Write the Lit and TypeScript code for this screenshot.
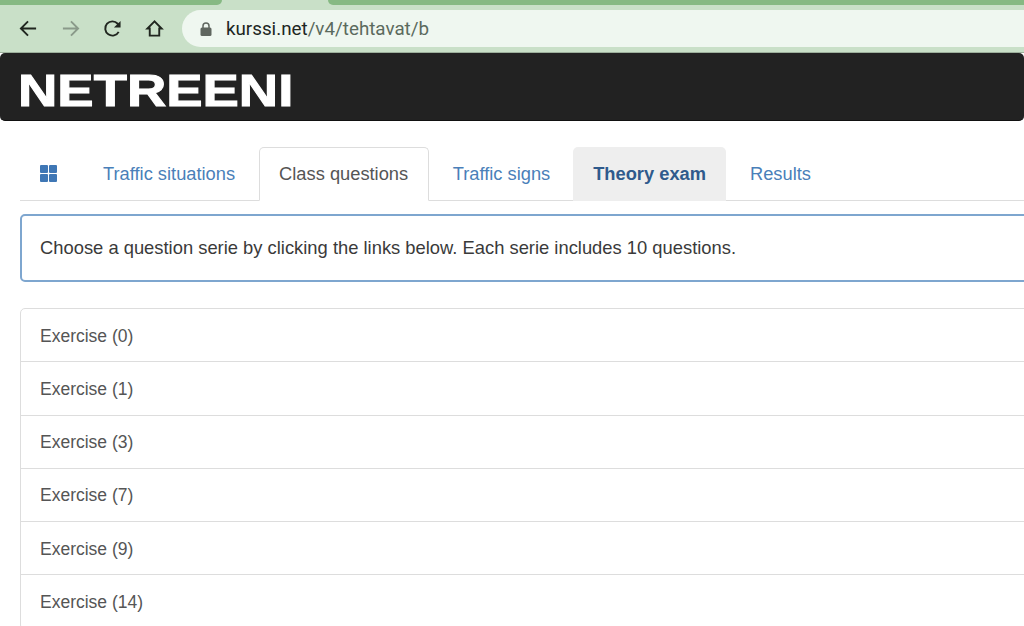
import { LitElement, html, css, svg } from "lit";
import { customElement } from "lit/decorators.js";

const rows = ["0", "1", "3", "7", "9", "14"];

@customElement("app-root")
export class AppRoot extends LitElement {
  static styles = css`
    :host { display: block; width: 1024px; height: 626px; overflow: hidden; background: #fff; font-family: "Liberation Sans", Arial, sans-serif; }
    .strip { display: flex; height: 5px; background: #c9e0c8; }
    .strip .l { width: 222px; background: #86b983; border-radius: 0 0 8px 0; }
    .strip .m { width: 106px; }
    .strip .r { flex: 1; background: #86b983; border-radius: 0 0 0 8px; }
    .toolbar { height: 48px; background: #c9e0c8; display: flex; align-items: center; padding-left: 19px; box-sizing: border-box; border-bottom: 1px solid #9db09c; }
    .toolbar svg.nav { width: 19px; height: 19px; flex: none; display: block; }
    .btns { display: flex; gap: 23px; width: 163px; flex: none; }
    .url { flex: 1; height: 37px; background: #eff7f0; border-radius: 19px 0 0 19px; display: flex; align-items: center; padding-left: 18px; font: 18.8px Roboto, sans-serif; color: #5b6a5d; }
    .url b { font-weight: 400; color: #20261f; }
    .url svg { width: 12px; height: 14px; margin-right: 14px; flex: none; }
    .brand { height: 68px; background: #222; border-radius: 5px; border-bottom: 1px solid #111; box-sizing: border-box; padding-left: 18px; padding-top: 8px; display: flex; align-items: center; }
    .brand span { font: 700 45px "Liberation Sans", sans-serif; color: #fff; -webkit-text-stroke: 1px #fff; display: inline-block; transform: scaleX(1.21); transform-origin: left center; line-height: 1; }
    .content { width: 1100px; padding: 26px 0 0 20px; box-sizing: border-box; }
    .tabs { display: flex; height: 54px; border-bottom: 1px solid #ddd; box-sizing: border-box; gap: 4px; font-size: 18.3px; }
    .tab { padding: 0 19px; display: flex; align-items: center; color: #4a7fb9; height: 54px; box-sizing: border-box; border-radius: 5px 5px 0 0; border: 1px solid transparent; }
    .tab.icon { width: 59px; padding: 0 0 2px 19px; }
    .tab.active { color: #555; background: #fff; border-color: #ddd; border-bottom-color: #fff; padding-right: 19.5px; }
    .tab.signs { padding-right: 18px; }
    .tab.exam { background: #eee; font-weight: 700; color: #2f5a8c; }
    .alert { margin-top: 13px; height: 68px; border: 2px solid #7ea6cf; border-radius: 5px; box-sizing: border-box; display: flex; align-items: center; padding-left: 18px; font-size: 18.36px; color: #3a3a3a; }
    .list { margin-top: 26px; border: 1px solid #ddd; border-radius: 5px; }
    .row { height: 53.25px; box-sizing: border-box; border-bottom: 1px solid #ddd; display: flex; align-items: center; padding: 2px 0 0 19px; color: #555; font-size: 17.5px; }
  `;

  render() {
    return html`
      <div class="strip"><div class="l"></div><div class="m"></div><div class="r"></div></div>
      <div class="toolbar">
        <div class="btns">
          <svg class="nav" viewBox="0 0 20 20" fill="none" stroke="#20261f" stroke-width="2"><path d="M18 10H2.500M9.500 2.500 2 10l7.500 7.500"/></svg>
          <svg class="nav" viewBox="0 0 20 20" fill="none" stroke="#8a9a8a" stroke-width="2"><path d="M2 10h15.500M10.500 2.500 18 10l-7.500 7.500"/></svg>
          <svg class="nav" viewBox="0 0 20 20" fill="none" stroke="#20261f" stroke-width="2"><path d="M16.500 13.500A7.500 7.500 0 1 1 15.500 5L17 7"/><path d="M18.500 2v7h-7z" fill="#20261f" stroke="none"/></svg>
          <svg class="nav" viewBox="0 0 20 20" fill="none" stroke="#20261f" stroke-width="2" stroke-linejoin="miter"><path d="M10 2.500 2.500 10H5v7.500h10V10h2.500z"/></svg>
        </div>
        <div class="url">
          <svg viewBox="0 0 12 14"><path d="M3 6V4a3 3 0 0 1 6 0v2" fill="none" stroke="#5f665f" stroke-width="1.500"/><rect x="0.500" y="5.500" width="11" height="8.500" rx="1.500" fill="#5f665f"/></svg>
          <span><b>kurssi.net</b>/v4/tehtavat/b</span>
        </div>
      </div>
      <div class="brand"><span>NETREENI</span></div>
      <div class="content">
        <div class="tabs">
          <div class="tab icon">
            <svg width="17" height="17" viewBox="0 0 17 17" fill="#3f77b5">${svg`<rect width="8" height="8" rx="1"/><rect x="9" width="8" height="8" rx="1"/><rect y="9" width="8" height="8" rx="1"/><rect x="9" y="9" width="8" height="8" rx="1"/>`}</svg>
          </div>
          <div class="tab">Traffic situations</div>
          <div class="tab active">Class questions</div>
          <div class="tab signs">Traffic signs</div>
          <div class="tab exam">Theory exam</div>
          <div class="tab">Results</div>
        </div>
        <div class="alert">Choose a question serie by clicking the links below. Each serie includes 10 questions.</div>
        <div class="list">
          ${rows.map((r) => html`<div class="row">Exercise (${r})</div>`)}
        </div>
      </div>
    `;
  }
}
